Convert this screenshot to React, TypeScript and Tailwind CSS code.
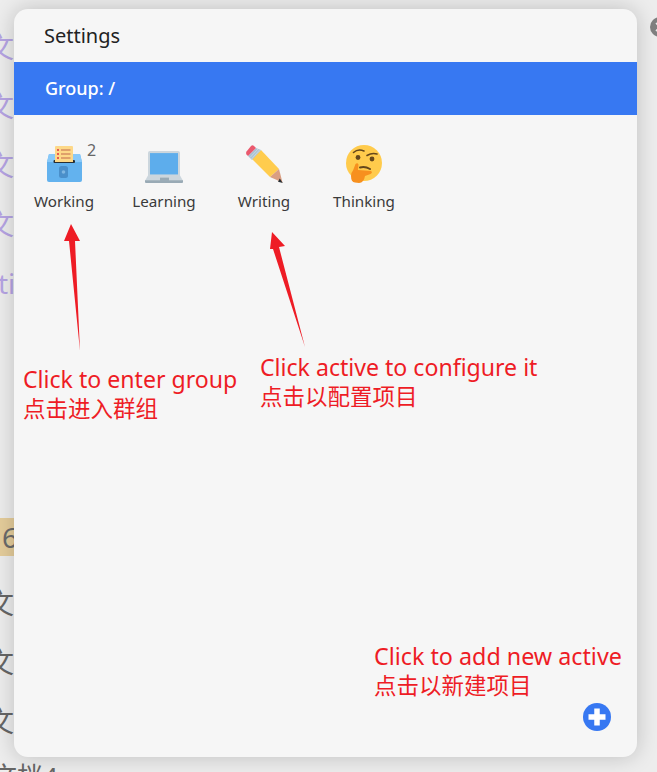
import React from "react";

const font = { fontFamily: '"Noto Sans", "Noto Sans CJK SC", sans-serif' };

function WorkingIcon() {
  return (
    <svg width="40" height="40" viewBox="0 0 40 40">
      <path d="M5 10 H36 L38 18 V36 Q38 38 36 38 H5 Q3 38 3 36 V18 Z" fill="#63b2ee" />
      <path d="M5 10 H36 L38 18 H3 Z" fill="#88c9f9" />
      <rect x="9.500" y="16" width="21.500" height="3" rx="1" fill="#292f33" />
      <path d="M11 3 Q11 2 12 2 H28 Q29 2 29 3 V18 H11 Z" fill="#fdd888" />
      <g fill="#dd2e44">
        <circle cx="14" cy="6" r="1" />
        <circle cx="14" cy="10" r="1" />
        <circle cx="14" cy="14" r="1" />
      </g>
      <g stroke="#c1694f" strokeWidth="1">
        <path d="M17 6 H26.500" />
        <path d="M17 10 H26.500" />
        <path d="M17 14 H26.500" />
      </g>
      <rect x="15" y="22" width="9" height="12" rx="2.500" fill="#4a8fca" />
      <circle cx="19.500" cy="28" r="1.800" fill="#7fb6e2" />
    </svg>
  );
}

function LaptopIcon() {
  return (
    <svg width="40" height="40" viewBox="0 0 40 40">
      <g transform="translate(0,5.900) scale(1,1.067)">
        <rect x="4" y="1" width="32" height="25" rx="2" fill="#ccd6dd" />
        <rect x="6" y="3" width="28" height="20" fill="#5dadec" />
        <path d="M4 24 H36 L39 29 H1 Z" fill="#ccd6dd" />
        <path d="M1 28.500 H39 V30 Q39 31 38 31 H2 Q1 31 1 30 Z" fill="#99aab5" />
        <rect x="16" y="26" width="9" height="3" fill="#99aab5" />
      </g>
    </svg>
  );
}

function PencilIcon() {
  return (
    <svg width="40" height="40" viewBox="0 0 40 40">
      <path d="M8 15 L17 6 L35 25 L26 33 Z" fill="#ffcc4d" />
      <path d="M26 33 L35 25 L38.500 38.500 Z" fill="#d99e82" />
      <path d="M35.800 34.500 L38.800 39 L34 37.800 Z" fill="#292f33" />
      <path d="M4 12 L12 4 L17 6 L8 16 Z" fill="#a9c3d4" />
      <path d="M6 13.500 L14 5 M7.500 15 L15.500 6" stroke="#ccd6dd" strokeWidth="1" />
      <path d="M2.500 7.500 L7 2 Q8.500 0.500 10 2 L12 4 L4 12 L2.500 10.500 Q1.500 9 2.500 7.500 Z" fill="#ea596e" />
    </svg>
  );
}

function ThinkingIcon() {
  return (
    <svg width="40" height="40" viewBox="0 0 40 40">
      <circle cx="20" cy="19" r="18" fill="#ffcb4c" />
      <path d="M9.500 8.500 Q14 4.500 20 7" stroke="#65471b" strokeWidth="1.600" fill="none" strokeLinecap="round" />
      <path d="M23 11.500 Q28 8.500 33 10" stroke="#65471b" strokeWidth="1.600" fill="none" strokeLinecap="round" />
      <circle cx="14" cy="13.500" r="2.400" fill="#65471b" />
      <circle cx="28" cy="15" r="2.400" fill="#65471b" />
      <path d="M16 23.500 Q21 22 26 25" stroke="#65471b" strokeWidth="2" fill="none" strokeLinecap="round" />
      <path d="M11 38.500 Q7 38 7 32 Q7 28.500 9 26.500 L11.500 20 Q13.500 18.500 14.500 20.500 L14 26 L27 27 Q29 28.500 26.500 30 L21 32 Q20 38.500 15 39 Z" fill="#f7901e" />
    </svg>
  );
}

function GroupItem({ icon, label, badge }: { icon: React.ReactNode; label: string; badge?: string }) {
  return (
    <div className="relative flex w-[100px] flex-col items-center">
      <div className="flex h-[40px] w-[40px] items-start justify-center">{icon}</div>
      <span className="mt-[7px] text-[15.200px] leading-[20px] text-[#3a3a3a]">{label}</span>
      {badge && <span className="absolute left-[73px] top-[-3px] text-[16px] leading-[18px] text-[#666]">{badge}</span>}
    </div>
  );
}

export default function App() {
  const purple = ["文", "文", "文", "文"];
  const lower = ["文", "文", "文"];

  return (
    <div className="relative h-[772px] w-[657px] overflow-hidden bg-[#ededed]" style={font}>
      {/* page behind the dialog */}
      <div className="pt-[18px] text-[28px] leading-[59px]">
        {purple.map((t, i) => (
          <div key={i} className="-ml-[14px] h-[59px] text-[#b6a4e4]">{t}</div>
        ))}
        <div className="-ml-[2px] h-[59px] text-[#b6a4e4]">ti</div>
        <div className="mt-[205px] flex h-[38px] w-[20px] items-center bg-[#e5cd9b] pl-[2px] text-[#6b6b6b]">6</div>
        {lower.map((t, i) => (
          <div key={i} className={`-ml-[14px] h-[59px] text-[#666] ${i === 0 ? "mt-[18px]" : ""}`}>{t}</div>
        ))}
        <div className="-ml-[9px] mt-[10px] whitespace-nowrap text-[26px] leading-[30px] text-[#666]">文档4</div>
      </div>

      {/* close button, mostly cut off */}
      <div className="absolute left-[650px] top-[17px] flex h-[20px] w-[20px] items-center justify-center rounded-full bg-[#808080]">
        <svg width="10" height="10" viewBox="0 0 10 10">
          <path d="M1 1 L9 9 M9 1 L1 9" stroke="#eee" strokeWidth="1.600" />
        </svg>
      </div>

      {/* dialog */}
      <div className="absolute left-[14px] top-[9px] flex h-[748px] w-[623px] flex-col overflow-hidden rounded-[14px] bg-[#f6f6f6] shadow-[0_0_22px_rgba(0,0,0,0.2)]">
        <div className="flex h-[53px] items-center pl-[30px] text-[20px] text-[#222]">Settings</div>
        <div className="flex h-[53px] items-center bg-[#3778f2] pl-[31px] text-[18px] font-medium text-white">Group: /</div>
        <div className="flex pt-[29px]">
          <GroupItem icon={<WorkingIcon />} label="Working" badge="2" />
          <GroupItem icon={<LaptopIcon />} label="Learning" />
          <GroupItem icon={<PencilIcon />} label="Writing" />
          <GroupItem icon={<ThinkingIcon />} label="Thinking" />
        </div>
        <button className="absolute left-[569px] top-[694px] flex h-[28px] w-[28px] items-center justify-center rounded-full bg-[#3778f2]">
          <svg width="18" height="18" viewBox="0 0 18 18">
            <path d="M9 0.500 V17.500 M0.500 9 H17.500" stroke="#fff" strokeWidth="5.500" />
          </svg>
        </button>
      </div>

      {/* red annotations drawn over the screenshot */}
      <svg className="absolute left-0 top-0" width="657" height="772" viewBox="0 0 657 772">
        <path d="M71 224 L80 241 L75 241 L80 351 L69 241 L64 241 Z" fill="#ee1c25" />
        <path d="M272 232 L285 246 L279 247 L305 347 L273 249 L270 249 Z" fill="#ee1c25" />
      </svg>
      <div className="absolute left-[23px] top-[365px] leading-[29px] text-[#ee1c25]">
        <div className="text-[23.100px]">Click to enter group</div>
        <div className="text-[22.500px]">点击进入群组</div>
      </div>
      <div className="absolute left-[260px] top-[353px] leading-[29px] text-[#ee1c25]">
        <div className="text-[23.100px]">Click active to configure it</div>
        <div className="text-[22.500px]">点击以配置项目</div>
      </div>
      <div className="absolute left-[374px] top-[642px] leading-[29px] text-[#ee1c25]">
        <div className="text-[23.300px]">Click to add new active</div>
        <div className="text-[22.500px]">点击以新建项目</div>
      </div>
    </div>
  );
}
